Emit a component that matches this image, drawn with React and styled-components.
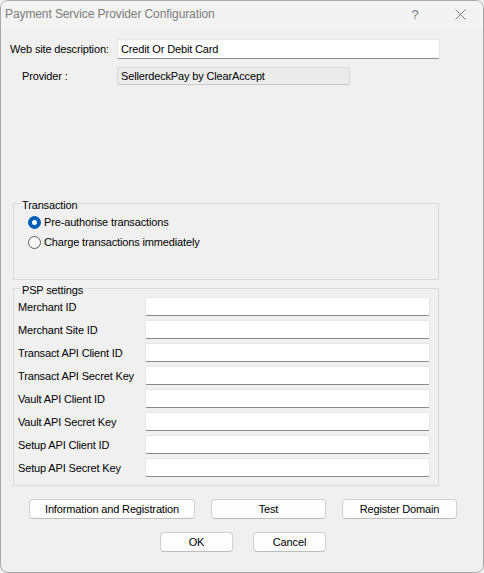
import styled, { createGlobalStyle } from "styled-components";

const GlobalStyle = createGlobalStyle`
  html, body {
    margin: 0;
    padding: 0;
    background: #f0f0f0;
  }
  * {
    box-sizing: border-box;
  }
`;

const Window = styled.div`
  width: 484px;
  height: 573px;
  background: #f0f0f0;
  border: 1px solid #a9a9a9;
  border-radius: 8px;
  overflow: hidden;
  font-family: "Liberation Sans", Arial, sans-serif;
  font-size: 11px;
  letter-spacing: -0.15px;
  color: #000;
  display: flex;
  flex-direction: column;
`;

const TitleBar = styled.div`
  height: 28px;
  display: flex;
  align-items: center;
  padding: 0 0 2px 4px;
  background: #f3f3f3;
  color: #7c7c7c;
  font-size: 12px;
  letter-spacing: -0.1px;
`;

const Title = styled.div`
  flex: 1;
`;

const TitleButton = styled.div`
  width: ${(p) => p.$w}px;
  display: flex;
  justify-content: center;
  align-items: center;
  color: #7a7a7a;
  font-size: 13px;
`;

const Body = styled.div`
  display: flex;
  flex-direction: column;
  padding-top: 10px;
`;

const TopForm = styled.div`
  display: grid;
  grid-template-columns: 107px auto;
  row-gap: 8px;
  padding-left: 9px;
  align-items: center;
`;

const Label = styled.div`
  padding-left: ${(p) => p.$indent || 0}px;
  white-space: nowrap;
`;

const Edit = styled.div`
  width: ${(p) => p.$w}px;
  height: ${(p) => p.$h || 19}px;
  background: ${(p) => (p.$readonly ? "#ebebeb" : "#ffffff")};
  border: 1px solid ${(p) => (p.$readonly ? "#d9d9d9" : "#e6e6e6")};
  border-bottom-color: ${(p) => (p.$readonly ? "#c8c8c8" : "#8a8a8a")};
  border-radius: 2px;
  display: flex;
  align-items: center;
  padding-left: 3px;
  white-space: nowrap;
`;

const Group = styled.fieldset`
  margin: ${(p) => p.$mt || 0}px 0 0 12px;
  width: 426px;
  height: ${(p) => p.$h}px;
  border: 1px solid #dadada;
  padding: 0 0 0 4px;
  min-width: 0;
`;

const Legend = styled.legend`
  margin-left: 3px;
  padding: 4px 2px 0 1px;
  line-height: 13px;
`;

const RadioRow = styled.label`
  height: 20px;
  display: flex;
  align-items: center;
  gap: 3px;
  padding-left: 10px;
`;

const Radio = styled.span`
  width: 13px;
  height: 13px;
  border-radius: 50%;
  display: flex;
  align-items: center;
  justify-content: center;
  background: ${(p) => (p.$checked ? "#005fb8" : "#f8f8f8")};
  border: 1px solid ${(p) => (p.$checked ? "#005fb8" : "#5c5c5c")};

  &::after {
    content: "";
    display: ${(p) => (p.$checked ? "block" : "none")};
    width: 5px;
    height: 5px;
    border-radius: 50%;
    background: #ffffff;
  }
`;

const FieldGrid = styled.div`
  display: grid;
  grid-template-columns: 127px 285px;
  row-gap: 4px;
  align-items: center;
`;

const ButtonRow = styled.div`
  display: flex;
  gap: ${(p) => p.$gap}px;
  padding-left: ${(p) => p.$left}px;
  margin-top: 13px;
`;

const Button = styled.button`
  width: ${(p) => p.$w}px;
  height: 20px;
  background: #fdfdfd;
  border: 1px solid #d0d0d0;
  border-bottom-color: #bdbdbd;
  border-radius: 4px;
  font-family: "Liberation Sans", Arial, sans-serif;
  font-size: 11px;
  letter-spacing: -0.15px;
  color: #000;
  padding: 0;
`;

const pspFields = [
  "Merchant ID",
  "Merchant Site ID",
  "Transact API Client ID",
  "Transact API Secret Key",
  "Vault API Client ID",
  "Vault API Secret Key",
  "Setup API Client ID",
  "Setup API Secret Key",
];

function CloseIcon() {
  return (
    <svg width="11" height="11" viewBox="0 0 11 11">
      <path d="M0.5 0.5 L10.5 10.5 M10.5 0.5 L0.5 10.5" stroke="#7a7a7a" strokeWidth="1" />
    </svg>
  );
}

export default function App() {
  return (
    <>
      <GlobalStyle />
      <Window>
        <TitleBar>
          <Title>Payment Service Provider Configuration</Title>
          <TitleButton $w={44}>?</TitleButton>
          <TitleButton $w={46}>
            <CloseIcon />
          </TitleButton>
        </TitleBar>
        <Body>
          <TopForm>
            <Label>Web site description:</Label>
            <Edit $w={323} $h={20}>Credit Or Debit Card</Edit>
            <Label $indent={12}>Provider :</Label>
            <Edit $w={233} $h={18} $readonly>
              SellerdeckPay by ClearAccept
            </Edit>
          </TopForm>

          <Group $mt={110} $h={85}>
            <Legend>Transaction</Legend>
            <RadioRow>
              <Radio $checked />
              Pre-authorise transactions
            </RadioRow>
            <RadioRow>
              <Radio />
              Charge transactions immediately
            </RadioRow>
          </Group>

          <Group $h={206}>
            <Legend>PSP settings</Legend>
            <FieldGrid>
              {pspFields.map((f) => (
                <>
                  <Label key={f}>{f}</Label>
                  <Edit $w={285} key={f + "-edit"} />
                </>
              ))}
            </FieldGrid>
          </Group>

          <ButtonRow $left={28} $gap={16}>
            <Button $w={166}>Information and Registration</Button>
            <Button $w={115}>Test</Button>
            <Button $w={115}>Register Domain</Button>
          </ButtonRow>
          <ButtonRow $left={159} $gap={20}>
            <Button $w={73}>OK</Button>
            <Button $w={73}>Cancel</Button>
          </ButtonRow>
        </Body>
      </Window>
    </>
  );
}
